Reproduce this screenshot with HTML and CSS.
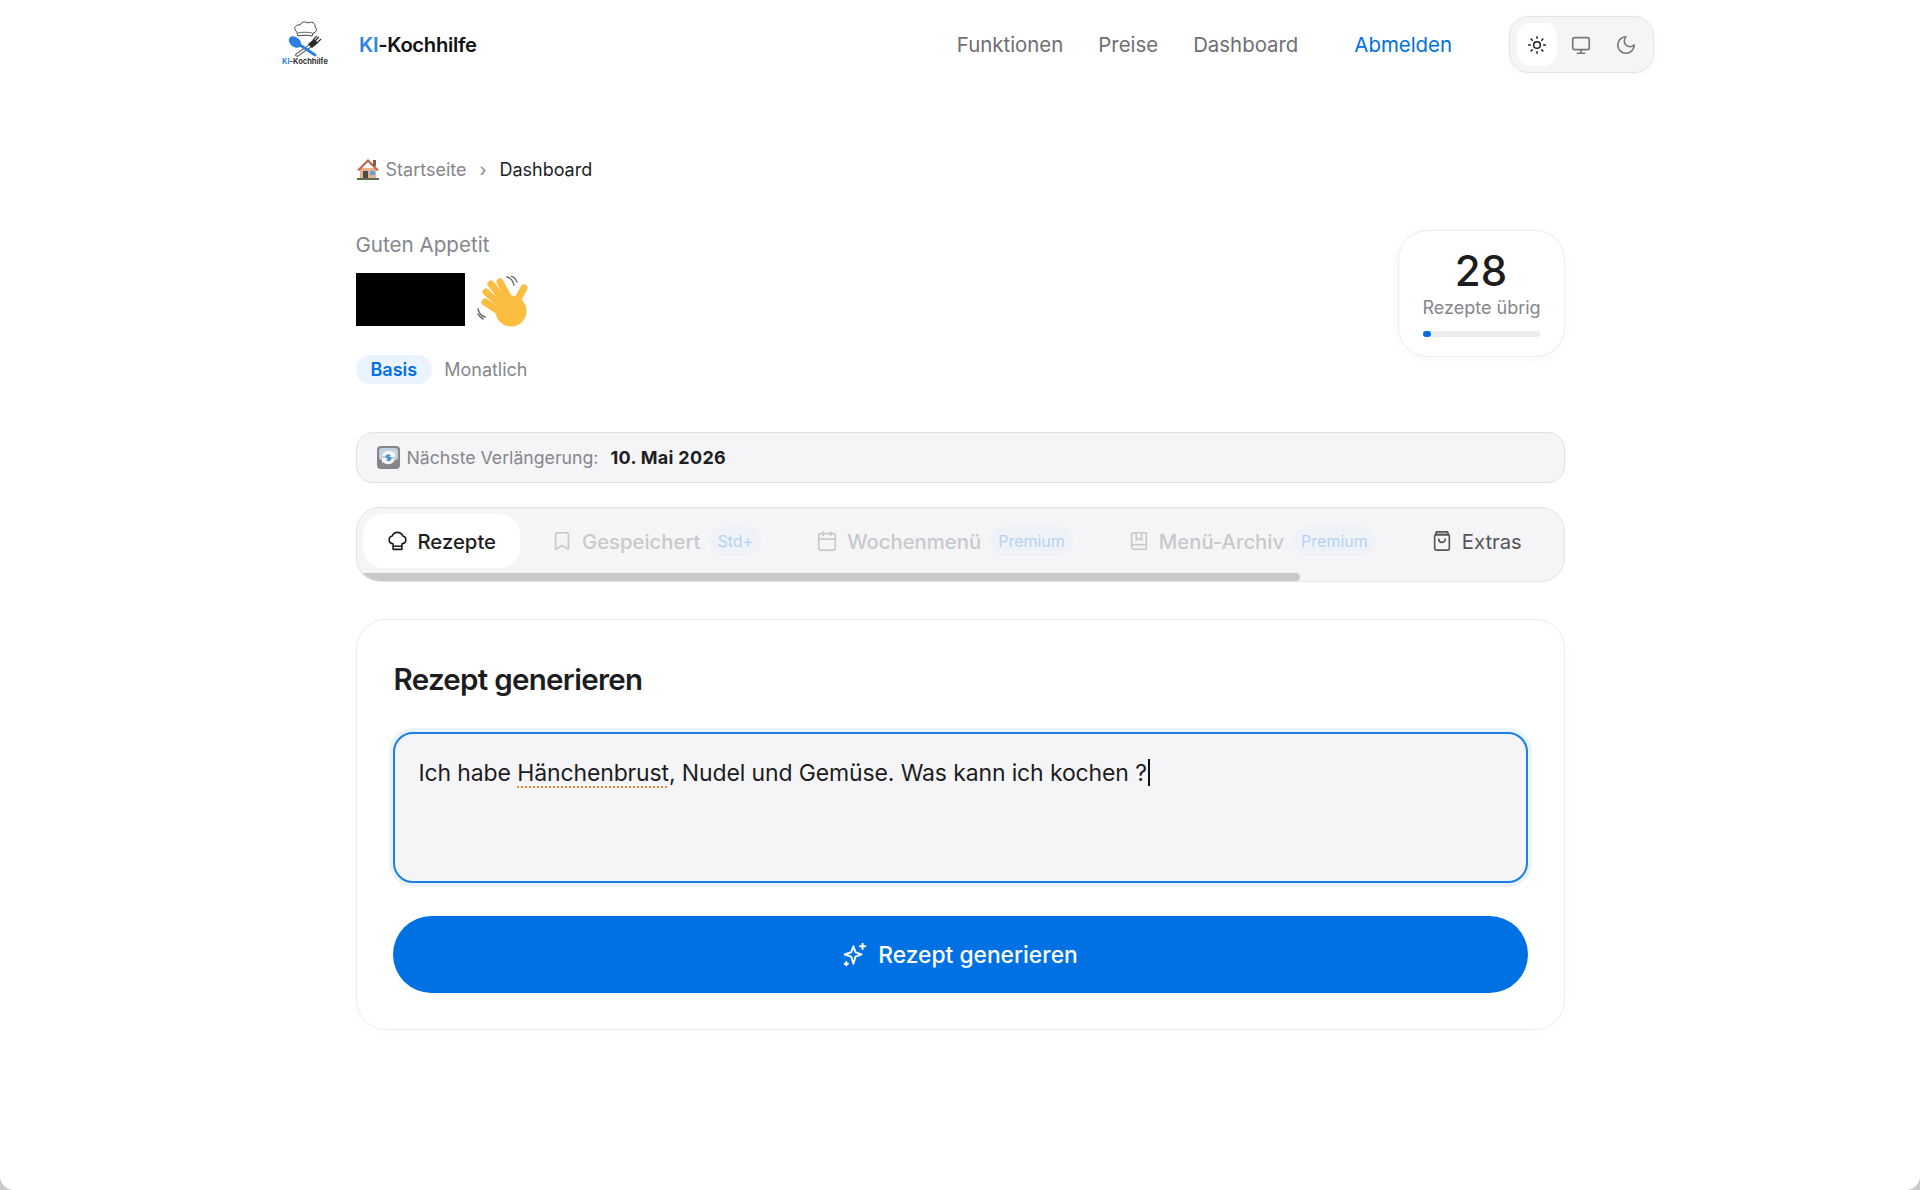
FILE: index.html
```html
<!DOCTYPE html>
<html lang="de">
<head>
    <meta charset="UTF-8">
    <meta name="viewport" content="width=device-width, initial-scale=1.0">
    <title>KI-Kochhilfe Dashboard</title>
    <link rel="stylesheet" href="styles.css">
</head>
<body>
    <div class="page">
        <header class="topbar">
            <div class="brand">
                <div class="logo">
                    <svg width="44" height="37" viewBox="0 0 44 37" fill="none">
                        <path d="M15 16c-1-3-1-4-2-5-3-3 0-7 4-6 1-3 5-4 8-2 3-2 8 0 7 4 3 2 1 6-2 6l-1 3c-4-1-10-1-14 0z" fill="#fff" stroke="#444" stroke-width="1"/>
                        <path d="M15 13c4-1 10-1 14 0" stroke="#444" stroke-width=".8"/>
                        <path d="M27 26L14 35" stroke="#444" stroke-width="3.400" stroke-linecap="round"/>
                        <path d="M27 26L14 35" stroke="#fff" stroke-width="1.600" stroke-linecap="round"/>
                        <path d="M25 24l6-5 4 4-6 5z" fill="#2a2a2a"/>
                        <path d="M30 20l4-4M32 21l4-4M34 23l4-4" stroke="#2a2a2a" stroke-width="1.100"/>
                        <path d="M17 25l15 10" stroke="#2b7fe0" stroke-width="2.800" stroke-linecap="round"/>
                        <ellipse cx="12" cy="22" rx="7" ry="4.800" transform="rotate(40 12 22)" fill="#2b7fe0"/>
                    </svg>
                    <div class="logo-text"><span class="accent">KI</span>-Kochhilfe</div>
                </div>
                <div class="brand-name"><span class="accent">KI</span>-Kochhilfe</div>
            </div>
            <nav class="nav">
                <a class="nav-link">Funktionen</a>
                <a class="nav-link">Preise</a>
                <a class="nav-link">Dashboard</a>
                <a class="nav-link logout">Abmelden</a>
                <div class="theme-switch">
                    <button class="theme-btn active">
                        <svg class="icon" width="20" height="20" viewBox="0 0 24 24"><circle cx="12" cy="12" r="4"/><path d="M12 2v2M12 20v2M4.900 4.900l1.400 1.400M17.700 17.700l1.400 1.400M2 12h2M20 12h2M6.300 17.700l-1.400 1.400M19.100 4.900l-1.400 1.400"/></svg>
                    </button>
                    <button class="theme-btn">
                        <svg class="icon" width="22" height="22" viewBox="0 0 24 24"><rect x="3" y="4" width="18" height="13" rx="2"/><path d="M12 17v4M8 21h8"/></svg>
                    </button>
                    <button class="theme-btn">
                        <svg class="icon" width="22" height="22" viewBox="0 0 24 24"><path d="M12 3a6 6 0 0 0 9 9 9 9 0 1 1-9-9z"/></svg>
                    </button>
                </div>
            </nav>
        </header>

        <main class="content">
            <div class="breadcrumb">
                <svg width="24" height="24" viewBox="0 0 24 24">
                    <path d="M4 11h16v11H4z" fill="#e9b08e"/>
                    <path d="M1 13L12 2l11 11-2 1-9-9-9 9z" fill="#b5654a"/>
                    <rect x="17" y="3" width="3" height="6" fill="#8d5a44"/>
                    <rect x="7" y="14" width="5" height="8" fill="#4a4a50"/>
                    <rect x="14" y="14" width="5" height="4" fill="#5aa2df"/>
                    <rect x="1" y="21" width="22" height="2" fill="#5d6b4f"/>
                </svg>
                <span class="crumb-link">Startseite</span>
                <span class="crumb-sep">›</span>
                <span class="crumb-current">Dashboard</span>
            </div>

            <section class="welcome">
                <div>
                    <div class="greeting">Guten Appetit</div>
                    <div class="name-row">
                        <div class="redacted"></div>
                        <svg class="wave" width="52" height="52" viewBox="0 0 52 52" fill="none">
                            <g stroke="#fbbd3f" stroke-width="7" stroke-linecap="round">
                                <path d="M8 26l18 12"/>
                                <path d="M9 16l19 17"/>
                                <path d="M14 8l17 22"/>
                                <path d="M23 6l12 22"/>
                                <path d="M37 30l10-18"/>
                            </g>
                            <circle cx="34" cy="35" r="15.500" fill="#fbbd3f"/>
                            <path d="M30 1c4 1 6 4 7 8M34 0c3 1 5 3 6 6M1 33c1 4 3 7 7 8M1 38c1 2 3 4 5 5" stroke="#6b6b6b" stroke-width="1.500" stroke-linecap="round"/>
                        </svg>
                    </div>
                    <div class="plan-row">
                        <span class="plan-badge">Basis</span>
                        <span class="plan-cycle">Monatlich</span>
                    </div>
                </div>
                <div class="stat-card">
                    <div class="stat-value">28</div>
                    <div class="stat-label">Rezepte übrig</div>
                    <div class="stat-track"><div class="stat-fill"></div></div>
                </div>
            </section>

            <div class="renewal">
                <svg width="23" height="23" viewBox="0 0 23 23">
                    <rect width="23" height="23" rx="4" fill="#85858a"/>
                    <rect x="2" y="2" width="19" height="12" rx="3" fill="#c3d0de"/>
                    <circle cx="11.500" cy="11.500" r="3" fill="#4d8fd6"/>
                    <path d="M5 10a7 7 0 0 1 12-3l1-2v6h-6l2-2a4 4 0 0 0-6 1zM18 13a7 7 0 0 1-12 3l-1 2v-6h6l-2 2a4 4 0 0 0 6-1z" fill="#f4f6f8"/>
                </svg>
                <span class="renewal-label">Nächste Verlängerung:</span>
                <span class="renewal-date">10. Mai 2026</span>
            </div>

            <div class="tabs">
                <div class="tab active">
                    <svg class="icon" width="21" height="21" viewBox="0 0 24 24"><path d="M7 21h10v-6.500a4.500 4.500 0 0 0 1-8.900 6.500 6.500 0 0 0-12 0 4.500 4.500 0 0 0 1 8.900z"/><path d="M7 17.500h10"/></svg>
                    <span>Rezepte</span>
                </div>
                <div class="tab locked">
                    <svg class="icon" width="22" height="22" viewBox="0 0 24 24"><path d="M19 21l-7-4-7 4V5a2 2 0 0 1 2-2h10a2 2 0 0 1 2 2z"/></svg>
                    <span>Gespeichert</span>
                    <span class="tier">Std+</span>
                </div>
                <div class="tab locked">
                    <svg class="icon" width="22" height="22" viewBox="0 0 24 24"><rect x="3" y="4" width="18" height="18" rx="2"/><path d="M16 2v4M8 2v4M3 10h18"/></svg>
                    <span>Wochenmenü</span>
                    <span class="tier">Premium</span>
                </div>
                <div class="tab locked">
                    <svg class="icon" width="22" height="22" viewBox="0 0 24 24"><path d="M4 19.500V5a2 2 0 0 1 2-2h14v18H6.500A2.500 2.500 0 0 1 4 18.500a2.500 2.500 0 0 1 2.500-2.500H20"/><path d="M9 3v8l3-2 3 2V3"/></svg>
                    <span>Menü-Archiv</span>
                    <span class="tier">Premium</span>
                </div>
                <div class="tab extra">
                    <svg class="icon" width="22" height="24" viewBox="0 0 24 24"><path d="M6 2h12l1 3H5z"/><rect x="4" y="5" width="16" height="17" rx="2"/><path d="M8.500 10a3.500 3.500 0 0 0 7 0"/></svg>
                    <span>Extras</span>
                </div>
                <div class="tabs-scrollbar"></div>
            </div>

            <section class="card">
                <h2 class="card-title">Rezept generieren</h2>
                <div class="prompt">Ich habe <span class="spell">Hänchenbrust</span>, Nudel und Gemüse. Was kann ich kochen ?<span class="caret"></span></div>
                <button class="submit">
                    <svg class="icon" width="26" height="26" viewBox="0 0 24 24"><path d="M10.500 4l2 5.500L18 11.500l-5.500 2-2 6.500-2-6.500L2.500 11.500 8.500 9.500z"/><path d="M19 1.500v5M16.500 4h5M4 18.500v3M2.500 20h3"/></svg>
                    Rezept generieren
                </button>
            </section>
        </main>
    </div>
</body>
</html>
```
FILE: styles.css
```css
* {
    box-sizing: border-box;
}
html {
    background-color: #c9c9ce;
}
body {
    margin: 0;
    font-family: Inter, "Liberation Sans", sans-serif;
    color: #1d1d1f;
}
.page {
    height: 1190px;
    overflow: hidden;
    background-color: white;
    border-radius: 0 0 14px 14px;
}
.accent {
    color: #2b84e8;
}
.icon {
    fill: none;
    stroke: currentColor;
    stroke-width: 1.8;
    stroke-linecap: round;
    stroke-linejoin: round;
    flex-shrink: 0;
}

/* header */
.topbar {
    display: flex;
    justify-content: space-between;
    align-items: center;
    height: 89px;
    padding: 0 266px 0 280px;
}
.brand {
    display: flex;
    align-items: center;
    gap: 29px;
}
.logo {
    width: 50px;
    margin-bottom: 3px;
    display: flex;
    flex-direction: column;
    align-items: center;
}
.logo-text {
    font-size: 7.500px;
    line-height: 9px;
    font-weight: 700;
    white-space: nowrap;
    color: #333;
}
.brand-name {
    font-size: 20.200px;
    font-weight: 600;
    letter-spacing: -0.3px;
    color: #111;
}
.nav {
    display: flex;
    align-items: center;
}
.nav-link {
    font-size: 20.400px;
    color: #6e6e73;
    margin-right: 35px;
}
.nav-link.logout {
    color: #0071e3;
    margin-left: 21px;
    margin-right: 57px;
}
.theme-switch {
    display: flex;
    align-items: center;
    gap: 4px;
    height: 57px;
    width: 145px;
    padding: 6px 7px;
    background-color: #f5f5f7;
    border: 1px solid #e4e4e7;
    border-radius: 20px;
    box-shadow: 0 2px 10px rgba(0,0,0,0.03);
}
.theme-btn {
    width: 41px;
    height: 100%;
    display: flex;
    align-items: center;
    justify-content: center;
    padding: 0;
    border: 0;
    border-radius: 14px;
    background: none;
    color: #77777c;
}
.theme-btn.active {
    background-color: white;
    color: #1d1d1f;
}

/* main column */
.content {
    width: 1209px;
    margin: 0 auto;
}
.breadcrumb {
    display: flex;
    align-items: center;
    height: 24px;
    margin-top: 68px;
    font-size: 18px;
}
.crumb-link {
    color: #86868b;
    margin-left: 6px;
}
.crumb-sep {
    color: #86868b;
    margin: 0 13px;
}
.crumb-current {
    color: #1d1d1f;
}
.welcome {
    display: flex;
    justify-content: space-between;
    margin-top: 49px;
}
.greeting {
    font-size: 20.600px;
    line-height: 24px;
    color: #86868b;
    margin-top: 3px;
}
.name-row {
    display: flex;
    align-items: center;
    gap: 12px;
    margin-top: 16px;
    height: 53px;
}
.wave {
    margin-top: 5px;
}
.redacted {
    width: 109px;
    height: 53px;
    background-color: #000;
}
.plan-row {
    display: flex;
    align-items: center;
    gap: 12px;
    margin-top: 29px;
    font-size: 18px;
}
.plan-badge {
    padding: 4px 15px;
    border-radius: 15px;
    background-color: #ebf3fe;
    color: #0071e3;
    font-weight: 600;
}
.plan-cycle {
    color: #86868b;
}
.stat-card {
    width: 167px;
    height: 127px;
    padding: 16px 24px 0;
    text-align: center;
    background-color: white;
    border: 1px solid #ededf0;
    border-radius: 30px;
    box-shadow: 0 2px 12px rgba(0,0,0,0.03);
}
.stat-value {
    font-size: 42px;
    line-height: 48px;
    font-weight: 500;
}
.stat-label {
    font-size: 18px;
    line-height: 22px;
    color: #86868b;
    margin-top: 2px;
    white-space: nowrap;
}
.stat-track {
    height: 6px;
    margin-top: 12px;
    background-color: #ececee;
    border-radius: 3px;
}
.stat-fill {
    width: 8px;
    height: 100%;
    background-color: #0071e3;
    border-radius: 3px;
}

/* renewal + tabs */
.renewal {
    display: flex;
    align-items: center;
    height: 51px;
    margin-top: 48px;
    padding-left: 20px;
    background-color: #f5f5f7;
    border: 1px solid #e2e2e5;
    border-radius: 17px;
    font-size: 17.700px;
}
.renewal-label {
    color: #86868b;
    margin-left: 7px;
}
.renewal-date {
    font-size: 18px;
    font-weight: 700;
    letter-spacing: 0.3px;
    margin-left: 12px;
}
.tabs {
    position: relative;
    display: flex;
    gap: 7px;
    height: 75px;
    margin-top: 24px;
    padding: 6px;
    background-color: #f5f5f7;
    border: 1px solid #e4e4e7;
    border-radius: 24px;
    overflow: hidden;
}
.tab {
    display: flex;
    align-items: center;
    gap: 9px;
    height: 54px;
    padding: 0 24px;
    border-radius: 20px;
    font-size: 20.300px;
    font-weight: 500;
    white-space: nowrap;
}
.tab.active {
    background-color: white;
    color: #1d1d1f;
    gap: 10px;
}
.tab.locked {
    color: #c9c9cc;
}
.tab.extra {
    color: #55555a;
    font-weight: 400;
}
.tier {
    padding: 5px 8px;
    border-radius: 15px;
    background-color: #eff2f7;
    color: #b5d2f5;
    font-size: 16px;
    font-weight: 400;
}
.tabs-scrollbar {
    position: absolute;
    left: 0;
    bottom: 0;
    width: 943px;
    height: 8px;
    border-radius: 0 4px 4px 8px;
    background-color: #c9c9cb;
}

/* generator card */
.card {
    margin-top: 37px;
    height: 411px;
    padding: 0 36px;
    background-color: white;
    border: 1px solid #ececef;
    border-radius: 30px;
    box-shadow: 0 2px 12px rgba(0,0,0,0.02);
}
.card-title {
    margin: 41px 0 0 1px;
    font-size: 29.500px;
    line-height: 36px;
    font-weight: 600;
    letter-spacing: -0.7px;
}
.prompt {
    height: 151px;
    margin-top: 35px;
    padding: 25px 24px;
    background-color: #f5f5f7;
    border: 2px solid #1a7fe6;
    border-radius: 20px;
    box-shadow: 0 0 0 4px rgba(0,113,227,0.08);
    font-size: 23px;
    line-height: 28px;
    letter-spacing: -0.13px;
    color: #1d1d1f;
}
.spell {
    text-decoration: underline dotted #ee8a2c 2px;
    text-underline-offset: 5px;
}
.caret {
    display: inline-block;
    width: 2px;
    height: 27px;
    margin-left: 1px;
    vertical-align: -5px;
    background-color: #111;
}
.submit {
    display: flex;
    align-items: center;
    justify-content: center;
    gap: 10px;
    width: 100%;
    height: 77px;
    margin-top: 33px;
    border: 0;
    border-radius: 39px;
    background-color: #0071e3;
    color: white;
    font-family: inherit;
    font-size: 22.800px;
    font-weight: 500;
}
```
